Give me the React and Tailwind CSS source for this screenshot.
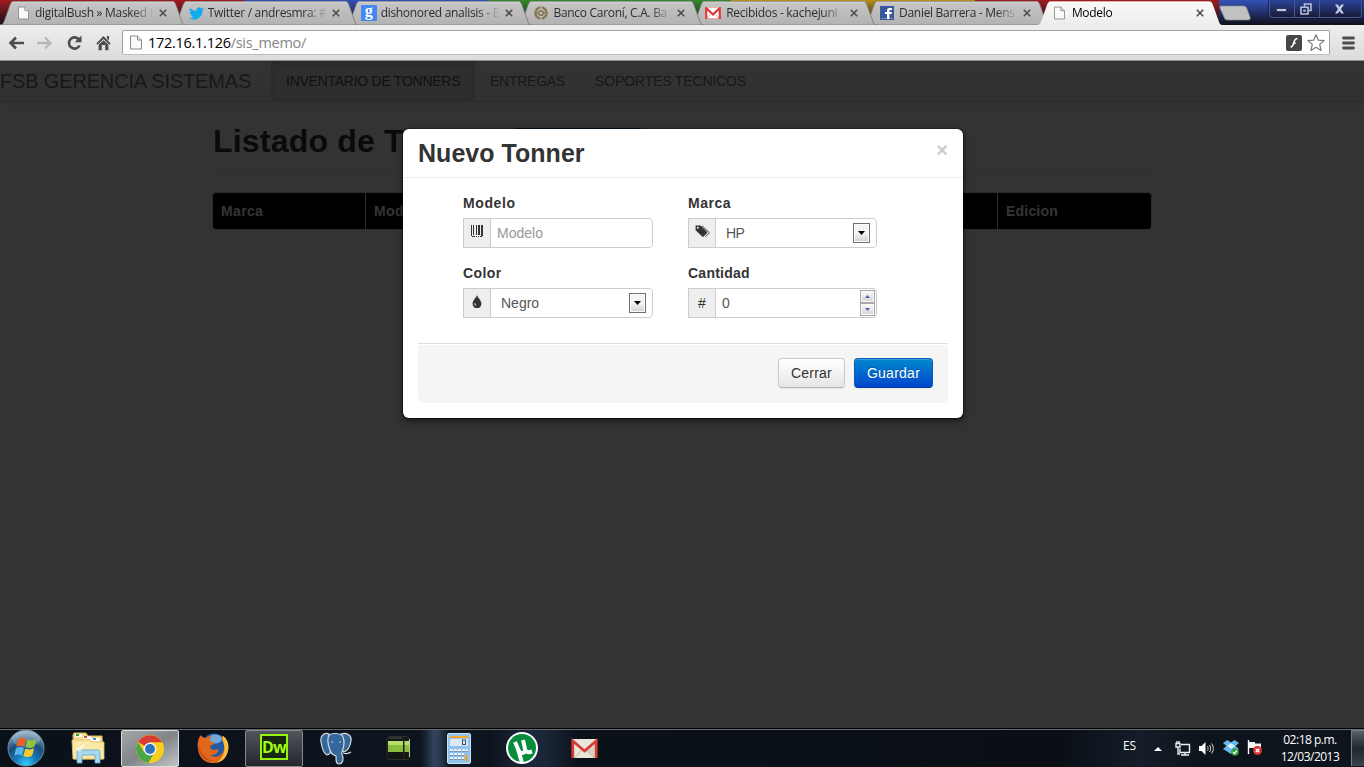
import React from "react";

const stripes = ["bg-[#a01c1f]", "bg-[#3451b8]", "bg-[#37892c]", "bg-[#b8901a]", "bg-[#a01c1f]", "bg-[#3451b8]"];

/* ---------- browser icons ---------- */
function PageIcon({ w = 12, h = 14 }) {
  return (
    <svg width={w} height={h} viewBox="0 0 12 14">
      <path d="M.5 .5H7.5L11.5 4.5V13.5H.5Z" fill="#fafafa" stroke="#8b8b8b" />
      <path d="M7.5 .5V4.5H11.5" fill="#e8e8e8" stroke="#8b8b8b" />
    </svg>
  );
}
function TwitterIcon() {
  return (
    <svg width="15" height="15" viewBox="0 0 24 24">
      <path fill="#0facf0" d="M24 4.6a10 10 0 0 1-2.8.8 5 5 0 0 0 2.1-2.7 10 10 0 0 1-3.1 1.2 4.9 4.9 0 0 0-8.4 4.5A14 14 0 0 1 1.7 3.1a4.9 4.9 0 0 0 1.5 6.6 5 5 0 0 1-2.2-.6 4.9 4.9 0 0 0 3.9 4.9 5 5 0 0 1-2.2.1 4.9 4.9 0 0 0 4.6 3.4A10 10 0 0 1 0 19.5 14 14 0 0 0 21.5 7.1 10 10 0 0 0 24 4.6z" />
    </svg>
  );
}
function GoogleIcon() {
  return (
    <span className="-ml-px flex h-4 w-4 items-center justify-center rounded-[1px] bg-[#4387f4] pb-[4px] font-['Liberation_Serif',serif] text-[16px] font-bold leading-none text-white">g</span>
  );
}
function BankIcon() {
  return (
    <svg width="14" height="14" viewBox="0 0 14 14" fill="none" stroke="#857a55">
      <circle cx="7" cy="7" r="5.6" strokeWidth="2.4" />
      <circle cx="7" cy="7" r="2.3" strokeWidth="1.6" />
      <path d="M7 0V3M7 11V14" stroke="#b9b9b9" strokeWidth="1.4" />
      <path d="M2 7H5M9 7H12" strokeWidth="1.4" />
    </svg>
  );
}
function GmailIcon() {
  return (
    <svg width="16" height="12" viewBox="0 0 16 12">
      <path d="M0 0H16V12H0Z" fill="#fff" />
      <path d="M2 11.5L6 6.5M14 11.5L10 6.5M2 11.5H14" stroke="#f0a8a4" fill="none" />
      <path d="M1.2 12V1L8 7.5L14.8 1V12" fill="none" stroke="#d93a35" strokeWidth="2.2" />
      <path d="M2 .5H14" stroke="#f0b5b0" />
    </svg>
  );
}
function FacebookIcon() {
  return (
    <svg width="14" height="14" viewBox="0 0 14 14">
      <path fill="#3b579d" d="M0 0H14V14H0Z" />
      <path fill="#6d84b4" d="M1 12H13V13H1Z" />
      <path fill="#fff" d="M7 13V8H5V6H7V4.5C7 2.7 8 2 9.6 2H12V4H10.3C9.6 4 9.4 4.3 9.4 5V6H12L11.7 8H9.4V13Z" />
    </svg>
  );
}
function CloseX() {
  return (
    <svg width="8" height="8" viewBox="0 0 8 8" stroke="#4c4c4c" strokeWidth="1.6">
      <path d="M.8 .8L7.2 7.2M7.2 .8L.8 7.2" />
    </svg>
  );
}

function Tab({ icon, title, active, z }) {
  return (
    <div className={"relative -mr-[12.2px] flex h-[25px] w-[185px] shrink-0 items-center " + z}>
      <svg className="absolute inset-0" width="185" height="25" viewBox="0 0 185 25">
        <defs>
          <linearGradient id="tabIdle" x1="0" x2="0" y1="0" y2="1">
            <stop offset="0" stopColor="#c6c6c6" />
            <stop offset="1" stopColor="#b2b2b2" />
          </linearGradient>
          <linearGradient id="tabActive" x1="0" x2="0" y1="0" y2="1">
            <stop offset="0" stopColor="#f9f9f9" />
            <stop offset="1" stopColor="#ededed" />
          </linearGradient>
        </defs>
        <path
          d="M0 25C3 25 4 22 5 19L10 5C11 2 12 1.5 15 1.5H171C174 1.5 175 2 176 5L181 19C182 22 183 25 185 25Z"
          fill={active ? "url(#tabActive)" : "url(#tabIdle)"}
          stroke={active ? "none" : "#777"}
          strokeWidth=".8"
        />
        <path d="M12 2.2H174" stroke={active ? "#fff" : "#d6d6d6"} />
      </svg>
      <div className="relative ml-[15px] flex w-[20px] items-center pl-[1px] pt-[1px]">{icon}</div>
      <div
        className={
          "relative w-[119px] whitespace-nowrap font-['Open_Sans','Noto_Sans',sans-serif] text-[12px] leading-[16px] tracking-[-0.3px]" +
          (active ? " text-black" : " text-[#2e2e2e]") +
          " [mask-image:linear-gradient(to_right,black_97px,transparent_119px)]"
        }
      >
        {title}
      </div>
      <div className="relative ml-[5px] pt-[1px]">
        <CloseX />
      </div>
    </div>
  );
}

function WindowButtons() {
  return (
    <div className="absolute left-[1269px] top-0 flex h-[18px] w-[93px] rounded-b-[4px] border border-t-0 border-[#4c578c] bg-linear-to-b from-[#2c449c] to-[#161b38] shadow-[0_0_0_1px_rgba(10,12,40,0.5)]">
      <div className="flex w-[25px] items-center justify-center border-r border-[#4c578c] pt-[3px] pr-[2px]">
        <svg width="11" height="4" viewBox="0 0 11 4"><path d="M.5 .5H10.5V3.5H.5Z" fill="#c4cae0" stroke="#20284a" strokeWidth=".8" /></svg>
      </div>
      <div className="flex w-[25px] items-center justify-center border-r border-[#4c578c] pr-[2px]">
        <svg width="12" height="12" viewBox="0 0 12 12" fill="none" stroke="#b8c0dc" strokeWidth="1.6">
          <path d="M4.500 3.500V1H11V7.500H8.500" />
          <path d="M1 4.300H8V11H1Z" />
          <path d="M3.700 7H5.300V8.300H3.700Z" strokeWidth="1" />
        </svg>
      </div>
      <div className="flex flex-1 items-center justify-center pr-[2px]">
        <svg width="11" height="10" viewBox="0 0 11 10"><path d="M1 .5H3.800L5.500 3L7.200 .5H10L7 5L10 9.500H7.200L5.500 7L3.800 9.500H1L4 5Z" fill="#c4cae0" /></svg>
      </div>
    </div>
  );
}

function TabStrip() {
  return (
    <div className="relative h-[25px] shrink-0 overflow-hidden bg-[#111]">
      <div className="absolute inset-0 flex">
        {stripes.map((c, i) => (
          <div key={i} className={"h-full w-[243.8px] shrink-0 " + c} />
        ))}
      </div>
      <div className="absolute inset-0 bg-linear-to-b from-transparent to-[#10101a]" />
      <div className="relative flex">
        <Tab z="z-[7]" icon={<span className="pl-[2px]"><PageIcon w={11} h={14} /></span>} title="digitalBush » Masked I" />
        <Tab z="z-[6]" icon={<TwitterIcon />} title="Twitter / andresmra: #" />
        <Tab z="z-[5]" icon={<GoogleIcon />} title="dishonored analisis - B" />
        <Tab z="z-[4]" icon={<BankIcon />} title="Banco Caroní, C.A. Ba" />
        <Tab z="z-[3]" icon={<span className="-ml-[2px]"><GmailIcon /></span>} title="Recibidos - kachejuni" />
        <Tab z="z-[2]" icon={<FacebookIcon />} title="Daniel Barrera - Mens" />
        <Tab z="z-[8]" active icon={<span className="pl-[1px]"><PageIcon w={11} h={14} /></span>} title="Modelo" />
      </div>
      <svg className="absolute left-[1219px] top-[5px]" width="32" height="16" viewBox="0 0 32 16">
        <path d="M1.500 1H24C26.500 1 27.500 2 28 4L31 12C31.500 14 31 15 29 15H9C6.500 15 5.500 14 5 12L1 3C.7 1.700 .8 1 1.500 1Z" fill="#c2c2c2" stroke="#8a8a8a" strokeWidth=".7" />
      </svg>
      <WindowButtons />
    </div>
  );
}

function Toolbar() {
  return (
    <div className="flex h-[36px] shrink-0 items-center border-b border-[#8e8e8e] bg-linear-to-b from-[#ededed] to-[#dcdcdc] pl-[8px]">
      <svg width="16" height="16" viewBox="0 0 16 16" fill="none" stroke="#4d4d4d" strokeWidth="2.600"><path d="M2.500 8H16M8 2.500L2.500 8L8 13.500" /></svg>
      <svg className="ml-[13px]" width="16" height="16" viewBox="0 0 16 16" fill="none" stroke="#b8b8b8" strokeWidth="2.300"><path d="M0 8H13.500M8 2.500L13.500 8L8 13.500" /></svg>
      <svg className="ml-[13px]" width="17" height="16" viewBox="0 0 17 16">
        <path d="M13 4.500A5.600 5.600 0 1 0 13.600 10.500" fill="none" stroke="#4d4d4d" strokeWidth="2.600" />
        <path d="M15.500 .5V7.300H8.700Z" fill="#4d4d4d" />
      </svg>
      <svg className="ml-[13px]" width="15" height="16" viewBox="0 0 15 16">
        <path d="M7.500 1L14.700 8.600L13.300 9.800L7.500 4L1.700 9.800L.3 8.600Z" fill="#4d4d4d" />
        <path d="M11 1H13V5.500L11 3.500Z" fill="#4d4d4d" />
        <path d="M2.600 9.800L7.500 5.300L12.400 9.800V15.300H9.200V10H5.800V15.300H2.600Z" fill="#4d4d4d" />
      </svg>
      <div className="ml-[11px] flex h-[25px] w-[1208px] items-center rounded-[2px] border border-[#a3a3a3] border-b-[#bbb] bg-white pl-[7px] pr-[3px]">
        <PageIcon w={12} h={15} />
        <div className="ml-[6px] flex-1 whitespace-nowrap font-['Open_Sans','Noto_Sans',sans-serif] text-[14.5px] leading-[20px] tracking-[-0.28px] text-[#858585]">
          <span className="text-black">172.16.1.126</span>/sis_memo/
        </div>
        <svg width="16" height="16" viewBox="0 0 16 16">
          <rect width="16" height="16" rx="2" fill="#474747" />
          <path d="M11.500 3.500C8 3.500 8.300 7 7.200 9.600C6.600 11 6 12 4.500 12.200" fill="none" stroke="#fff" strokeWidth="1.600" />
          <path d="M7 8.200H10" stroke="#fff" strokeWidth="1.200" />
        </svg>
        <svg className="ml-[4px]" width="20" height="20" viewBox="0 0 20 20">
          <path d="M10 1.800L12.300 7.200L18.200 7.600L13.700 11.400L15.100 17.400L10 14.200L4.900 17.400L6.300 11.400L1.800 7.600L7.700 7.200Z" fill="#fff" stroke="#7c7c7c" strokeWidth="1.200" strokeLinejoin="round" />
        </svg>
      </div>
      <svg className="ml-[12px]" width="13" height="14" viewBox="0 0 13 14" stroke="#4d4d4d" strokeWidth="2.800" strokeLinecap="round"><path d="M1.500 2H11.500M1.500 7H11.500M1.500 12H11.500" /></svg>
    </div>
  );
}

/* ---------- page ---------- */
function Field({ label, addon, width, track, children }) {
  return (
    <div className="flex flex-col">
      <label className={"mb-[5px] text-[14px] font-bold leading-[20px] text-[#333] " + track}>{label}</label>
      <div className={"flex h-[30px] " + width}>
        <span className="flex w-[28px] shrink-0 items-center justify-center border border-[#ccc] bg-[#eee] text-[14px] leading-[20px] text-[#333]">{addon}</span>
        <div className="-ml-px flex flex-1 items-center rounded-r-[4px] border border-[#ccc] bg-white text-[14px] text-[#555]">{children}</div>
      </div>
    </div>
  );
}
function DropArrow() {
  return (
    <span className="mr-[6px] flex h-[20px] w-[17px] items-center justify-center border border-[#707070] bg-linear-to-b from-[#f4f4f4] from-50% to-[#cfcfcf] shadow-[inset_0_0_0_1px_#fcfcfc]">
      <svg width="7" height="4" viewBox="0 0 7 4"><path d="M0 0H7L3.500 4Z" fill="#000" /></svg>
    </span>
  );
}
function SpinButton({ up }) {
  return (
    <span className="flex h-[13px] w-[15px] items-center justify-center border border-[#a9a9ad] bg-linear-to-b from-[#f8f8f8] to-[#d6d6d8] shadow-[inset_0_0_0_1px_#fafafa]">
      <svg width="5" height="3" viewBox="0 0 5 3"><path d={up ? "M0 3H5L2.500 0Z" : "M0 0H5L2.500 3Z"} fill="#4d63b5" /></svg>
    </span>
  );
}
function Barcode() {
  return (
    <svg className="mb-[3px]" width="12" height="13" viewBox="0 0 12 13" fill="#333" shapeRendering="crispEdges">
      <path d="M0 0H1V11H0ZM2 0H3V10H2ZM5 0H6V10H5ZM7 0H9V10H7ZM10 0H12V11H10ZM1 11H4V12H1ZM5 11H6V12H5ZM7 11H8V12H7ZM9 11H11V12H9Z" />
    </svg>
  );
}
function Tags() {
  return (
    <svg className="mb-[4px]" width="15" height="13" viewBox="0 0 15 13">
      <path d="M.6 .6H5.500L12 6.800C12.400 7.300 12.400 7.800 12 8.200L8.600 11.600C8.100 12 7.600 12 7.200 11.600L.6 5.300Z" fill="#333" />
      <circle cx="2.800" cy="2.800" r="1" fill="#eee" />
      <path d="M7 .8L14 7.200C14.300 7.600 14.300 7.900 14 8.300L10.500 11.800" fill="none" stroke="#444" strokeWidth="1" />
    </svg>
  );
}
function Drop() {
  return (
    <svg className="mb-[4px] mr-[1px]" width="10" height="13" viewBox="0 0 10 13">
      <path d="M5 0C5.600 2.400 9.400 5.500 9.400 8.800A4.300 4.300 0 0 1 .6 8.800C.6 5.500 4.400 2.400 5 0Z" fill="#333" />
      <path d="M2.300 8.300C2.200 9.800 3 10.600 4.300 10.800C4.400 9.800 3.200 9.400 3.300 8Z" fill="#ddd" />
    </svg>
  );
}

function Modal() {
  return (
    <div className="absolute left-[403px] top-[68px] flex h-[289px] w-[560px] flex-col rounded-[6px] bg-white shadow-[0_0_0_1px_rgba(0,0,0,0.3),0_3px_7px_rgba(0,0,0,0.6)]">
      <div className="flex h-[49px] items-start justify-between border-b border-[#eee] px-[15px]">
        <h3 className="pt-[9px] text-[25px] font-bold leading-[30px] tracking-[0.03px] text-[#333]">Nuevo Tonner</h3>
        <button className="pt-[11px] text-[20px] font-bold leading-[20px] text-[#ccc]">×</button>
      </div>
      <div className="grid grid-cols-[190px_189px] gap-x-[35px] gap-y-[15px] pl-[60px] pt-[15px]">
        <Field label="Modelo" track="tracking-[0.6px]" width="w-[190px]" addon={<Barcode />}>
          <span className="pl-[6px] text-[#999]">Modelo</span>
        </Field>
        <Field label="Marca" track="tracking-[0.5px]" width="w-[189px]" addon={<Tags />}>
          <span className="flex-1 pl-[10px] tracking-[-0.5px]">HP</span>
          <DropArrow />
        </Field>
        <Field label="Color" track="tracking-[0.4px]" width="w-[190px]" addon={<Drop />}>
          <span className="flex-1 pl-[10px]">Negro</span>
          <DropArrow />
        </Field>
        <Field label="Cantidad" track="tracking-[0.25px]" width="w-[189px]" addon="#">
          <span className="flex-1 pl-[6px]">0</span>
          <span className="mr-[1px] flex flex-col">
            <SpinButton up />
            <SpinButton />
          </span>
        </Field>
      </div>
      <div className="mx-[15px] mt-[25px] flex h-[60px] items-start justify-end gap-[9px] rounded-b-[6px] border-t border-[#ddd] bg-[#f5f5f5] px-[15px] pt-[14px] shadow-[inset_0_1px_0_#fff]">
        <button className="h-[30px] w-[67px] rounded-[4px] border border-[#ccc] border-b-[#b3b3b3] bg-linear-to-b from-white to-[#e6e6e6] text-[14px] leading-[20px] tracking-[0.2px] text-[#333] shadow-[0_1px_2px_rgba(0,0,0,0.05)]">Cerrar</button>
        <button className="h-[30px] w-[79px] rounded-[4px] border border-[#0a5cc0] border-b-[#003a9e] bg-linear-to-b from-[#0088cc] to-[#0044cc] text-[14px] leading-[20px] tracking-[0.25px] text-white shadow-[inset_0_1px_0_rgba(255,255,255,0.2),0_1px_2px_rgba(0,0,0,0.05)] [text-shadow:0_-1px_0_rgba(0,0,0,0.25)]">Guardar</button>
      </div>
    </div>
  );
}

function Page() {
  return (
    <div className="relative h-[667px] shrink-0 overflow-hidden bg-white font-['Liberation_Sans',Arial,sans-serif]">
      <div className="flex h-[41px] items-stretch border-b border-[#d4d4d4] bg-linear-to-b from-white to-[#f2f2f2] text-[14px] leading-[40px] text-[#777] shadow-[0_1px_10px_rgba(0,0,0,0.1)]">
        <div className="w-[271px] whitespace-nowrap text-[20px] tracking-[-0.16px]">FSB GERENCIA SISTEMAS</div>
        <div className="w-[204px] whitespace-nowrap bg-[#e5e5e5] pl-[15px] tracking-[-0.26px] text-[#555] shadow-[inset_0_3px_8px_rgba(0,0,0,0.125)]">INVENTARIO DE TONNERS</div>
        <div className="w-[105px] pl-[15px] tracking-[-0.25px]">ENTREGAS</div>
        <div className="pl-[15px] tracking-[-0.15px]">SOPORTES TECNICOS</div>
      </div>
      <div className="ml-[212px] flex w-[940px] flex-col">
        <div className="flex h-[70px] items-start border-b border-[#e5e5e5] pt-[19px]">
          <h1 className="whitespace-nowrap pl-px text-[32px] font-bold leading-[40px] tracking-[0.2px] text-[#333]">Listado de Tonners</h1>
          <span className="ml-[4px] mt-[7px] h-[30px] w-[130px] rounded-[4px] bg-[#0074cc]" />
        </div>
        <div className="mt-[20px] flex h-[38px] items-stretch overflow-hidden rounded-[4px] border border-[#ddd] bg-black text-[14px] font-bold leading-[36px] text-white">
          <div className="w-[152px] pl-[8px] tracking-[0.35px]">Marca</div>
          <div className="w-[210px] border-l border-[#ddd] pl-[8px] tracking-[0.35px]">Modelo</div>
          <div className="w-[210px] border-l border-[#ddd] pl-[8px]">Color</div>
          <div className="flex-1 border-l border-[#ddd] pl-[8px]">Cantidad</div>
          <div className="w-[154px] border-l border-[#ddd] pl-[8px] tracking-[0.2px]">Edicion</div>
        </div>
      </div>
      <div className="absolute inset-0 bg-black/80" />
      <Modal />
    </div>
  );
}

/* ---------- taskbar ---------- */
function StartOrb() {
  return (
    <svg width="38" height="38" viewBox="0 0 38 38">
      <defs>
        <radialGradient id="orb" cx=".5" cy=".95" r=".9">
          <stop offset="0" stopColor="#2ed0ff" />
          <stop offset=".35" stopColor="#1576b4" />
          <stop offset=".65" stopColor="#1d4d78" />
          <stop offset="1" stopColor="#88a9c0" />
        </radialGradient>
      </defs>
      <circle cx="19" cy="19" r="18" fill="url(#orb)" stroke="#6f8ba2" strokeWidth="1" />
      <ellipse cx="19" cy="10" rx="14" ry="8" fill="#fff" opacity=".2" />
      <path d="M11 10.500C14 8 16 8.500 19 10L17.300 17.500C14.500 16 12 16.200 9.300 18Z" fill="#f06125" />
      <path d="M20.300 10.500C23.500 12 26 12 29.500 10L27.500 17.500C24.500 19.500 21.500 19.500 18.600 18Z" fill="#8fc53d" />
      <path d="M9 19.300C12 17.500 14.500 17.500 17 19L15 26.500C12.500 25 10 25 7.300 27Z" fill="#56b5ea" />
      <path d="M18.300 19.500C21 21 24 21 27.200 19L25.200 26.500C22 28.500 19 28.500 16.400 27Z" fill="#fdc92e" />
    </svg>
  );
}
function ExplorerIcon() {
  return (
    <svg width="34" height="32" viewBox="0 0 34 32">
      <path d="M2 3L3 1H15L17 4H31L32 27H3Z" fill="#f4dc85" stroke="#d8b458" />
      <path d="M4 2H11V5H4Z" fill="#fff" /><path d="M5 2H8V4H5Z" fill="#27a234" />
      <path d="M12 4H20V7H12Z" fill="#fff" /><path d="M13 4H16V6H13Z" fill="#d14935" />
      <path d="M20 6H29V9H20Z" fill="#fff" /><path d="M22 6H25V8H22Z" fill="#3a8de0" />
      <path d="M1 8H18L20 10H33V27H2Z" fill="#fae9a6" stroke="#dfc069" strokeWidth=".8" />
      <path d="M6 31V20C6 19 7 18 8 18H27C28 18 29 19 29 20V31H24V23H11V31Z" fill="#a8d8ef" stroke="#63a4c7" strokeWidth=".8" />
      <path d="M4 17L16 11L9 20Z" fill="#fff" opacity=".6" />
    </svg>
  );
}
function ChromeIcon() {
  return (
    <svg width="28" height="28" viewBox="0 0 28 28">
      <circle cx="14" cy="14" r="14" fill="#f8ce1c" />
      <path d="M14 14L2 7A14 14 0 0 1 26.300 7.500H14Z" fill="#d83c32" />
      <path d="M1.900 7A14 14 0 0 0 12.500 27.900L18.500 17.500L14 14L8 17Z" fill="#4ba64a" />
      <path d="M14 7.500H26.300C29 14 27 25 12.500 27.900L20 16.500Z" fill="#f8ce1c" />
      <circle cx="14" cy="14" r="6.500" fill="#f4f4f4" />
      <circle cx="14" cy="14" r="5" fill="#2b73bd" />
    </svg>
  );
}
function FirefoxIcon() {
  return (
    <svg width="32" height="32" viewBox="0 0 32 32">
      <circle cx="17" cy="14" r="12.500" fill="#245aa5" />
      <ellipse cx="18" cy="7" rx="7" ry="4.500" fill="#8cc4ec" opacity=".75" />
      <path d="M2 6C3 4 4 3 4 3C5 5 7 6 9 6C11 4 13 4 15 5C13 6 12 8 13 9C15 10 17 10 17 11C17 13 14 13 13 15C14 18 17 19 21 17C22 21 17 24 13 23C18 27 26 24 27 17C28 12 25 8 25 7C24 5 25 4 26 4C32 8 33 17 29 24C25 31 15 33 8 29C1 25-1 14 2 6Z" fill="#e2661d" />
      <path d="M26 4C32 8 33 17 29 24C27 28 23 30 19 31C25 27 29 20 27 12C26 9 25 6 26 4Z" fill="#f9c03b" />
      <path d="M2 12C2 21 8 28 17 29C10 30 1 24 2 12Z" fill="#b73818" />
    </svg>
  );
}
function PostgresIcon() {
  return (
    <svg width="32" height="33" viewBox="0 0 32 33" stroke="#d6dde2" strokeWidth="1.200" strokeLinejoin="round">
      <path d="M9 2C4 0 0 4 1 10C2 16 4 22 7 23C9 23 10 21 11 20Z" fill="#35689a" />
      <path d="M21 2C26 0 32 3 31 9C30 15 27 19 24 20L21 17Z" fill="#35689a" />
      <path d="M9 3C12 1 18 1 22 3C25 8 24 15 22 20C21 23 23 23 23 26C23 30 22 32 19 32C16 32 16 29 16 24C13 23 11 22 10 18C8 13 7 7 9 3Z" fill="#35689a" />
      <path d="M23 21C26 22 28 22 31 20" fill="none" />
      <circle cx="12" cy="10" r=".7" fill="#fff" stroke="none" /><circle cx="20" cy="10" r=".7" fill="#fff" stroke="none" />
    </svg>
  );
}
function BatteryIcon() {
  return (
    <svg width="25" height="24" viewBox="0 0 25 24">
      <rect x="1" y=".5" width="22" height="23" rx="2.500" fill="#141614" stroke="#2c2e2c" />
      <path d="M2 5H23V16H2Z" fill="#8bbd3d" /><path d="M2 5H23V9H2Z" fill="#b9dd6c" />
      <path d="M17 1H18.500V23H17Z" fill="#20241a" />
      <path d="M23.500 3V21" stroke="#b9c39d" />
      <path d="M3 2H16" stroke="#555" />
    </svg>
  );
}
function CalcIcon() {
  return (
    <svg width="24" height="31" viewBox="0 0 24 31">
      <rect x=".5" y=".5" width="23" height="30" rx="1.500" fill="#8fc3ed" stroke="#c8e2f6" />
      <path d="M3 3H21V5H3Z" fill="#f7a534" /><path d="M3 6H21V13H3Z" fill="#d9e8f2" />
      <rect x="15.500" y="7" width="3" height="4.500" fill="none" stroke="#35506f" strokeWidth="1" />
      <path d="M3 17.500H21M3 21.500H17M3 25.500H17" stroke="#f6faff" strokeWidth="2.500" strokeDasharray="3 1" />
      <path d="M3 18.500H21M3 22.500H17M3 26.500H17" stroke="#7b8ba5" strokeWidth="1" strokeDasharray="3 1" />
      <path d="M18 22H20.500V28H18Z" fill="#f19b28" />
    </svg>
  );
}
function UTorrentIcon() {
  return (
    <svg width="32" height="32" viewBox="0 0 32 32">
      <circle cx="16" cy="16" r="16" fill="#fff" /><circle cx="16" cy="16" r="14" fill="#078c3c" />
      <path d="M9 10L13 19.500C14.500 22.500 20 21 19 17L17 8M19 17C20 21 23 20.500 26 19.500" fill="none" stroke="#fff" strokeWidth="4" />
      <path d="M12 17L16 31" stroke="#fff" strokeWidth="4" />
    </svg>
  );
}
function GmailTask() {
  return (
    <svg width="27" height="21" viewBox="0 0 27 21">
      <rect x="1" y="1" width="25" height="19" rx="1" fill="#e9e6da" />
      <path d="M4 20L11 11M23 20L16 11" stroke="#c0bcae" /><path d="M13.500 13L24 20H26V6Z" fill="#c9c5b6" opacity=".6" />
      <path d="M1.800 20V3L13.500 13L25.200 3V20" fill="none" stroke="#d63c33" strokeWidth="2.800" />
    </svg>
  );
}

function Tray() {
  return (
    <div className="ml-auto flex h-full items-center font-['Open_Sans','Noto_Sans',sans-serif] text-white">
      <span className="mb-[4px] w-[31px] text-[12px] leading-none tracking-[-0.1px]">ES</span>
      <svg className="mt-[1px]" width="8" height="4" viewBox="0 0 8 4"><path d="M0 4H8L4 0Z" fill="#fff" /></svg>
      <svg className="ml-[13px]" width="16" height="15" viewBox="0 0 16 15" fill="none" stroke="#eee" strokeWidth="1.400">
        <path d="M6 3.500H14.500V11.500H5V7.500M10 11.500V14M6 14H14" /><path d="M1 2.500H5V6H1ZM2 0V2.500M4 0V2.500M3 6V13H5" />
      </svg>
      <svg className="ml-[8px]" width="16" height="15" viewBox="0 0 16 15">
        <path d="M0 5H2.500L6.500 1V14L2.500 10H0Z" fill="#fff" />
        <path d="M8.500 5.500C9.300 7 9.300 8 8.500 9.500M10.500 4C12 6.500 12 8.500 10.500 11M12.500 2.500C15 6 15 9 12.500 12.500" fill="none" stroke="#ddd" />
      </svg>
      <svg className="ml-[8px]" width="16" height="16" viewBox="0 0 16 16">
        <path d="M4.500 0L8 2.500L11.500 0L16 3L12.500 6L16 9L8 14L0 9L3.500 6L0 3Z" fill="#65b8ee" />
        <path d="M8 3L12 6L8 9L4 6Z" fill="#d6effe" />
        <circle cx="12" cy="12" r="3.800" fill="#32a03c" /><path d="M10 12L11.500 13.500L14 10.500" stroke="#fff" fill="none" strokeWidth="1.200" />
      </svg>
      <svg className="ml-[8px]" width="16" height="16" viewBox="0 0 16 16">
        <path d="M1.500 0V14" stroke="#fff" strokeWidth="1.400" /><path d="M2 2H8V3.500H14V9H8V8H2Z" fill="#f4f4f4" />
        <circle cx="10.500" cy="10.500" r="4.500" fill="#d93029" /><path d="M8.700 8.700L12.300 12.300M12.300 8.700L8.700 12.300" stroke="#fff" strokeWidth="1.400" />
      </svg>
      <div className="ml-[14px] flex w-[66px] flex-col items-center whitespace-nowrap text-[12px] leading-[17px] tracking-[-0.5px]">
        <span>02:18 p.m.</span>
        <span>12/03/2013</span>
      </div>
      <div className="ml-[8px] h-full w-[13px] border-l border-t border-[#777f86] bg-linear-to-b from-[#59616a] via-[#20262d] to-[#3b424a]" />
    </div>
  );
}

function Taskbar() {
  return (
    <div className="flex h-[39px] shrink-0 items-center border-t border-black bg-[#0d131b] bg-[linear-gradient(to_right,#0a1119_0px,#0d141d_420px,#1a2536_426px,#34445e_434px,#2b394f_440px,#111923_449px,#0d141d_490px,#1b273a_530px,#1b2638_545px,#0b1119_580px,#0a0f16_1060px,#141d29_1140px,#0d141c_1200px,#0d141c_1364px)]">
      <div className="flex h-[38px] flex-1 items-center border-t border-[#656b71] pb-[1px]">
        <div className="ml-[7px] flex w-[38px]"><StartOrb /></div>
        <div className="ml-[26px] flex w-[34px] justify-center"><ExplorerIcon /></div>
        <div className="ml-[16px] flex h-[37px] w-[58px] items-center justify-center self-start rounded-[2px] border border-[#dcdcdc] bg-linear-to-br from-[#a5a7a9] via-[#828588] to-[#c2c3c5]"><ChromeIcon /></div>
        <div className="ml-[18px] flex w-[32px]"><FirefoxIcon /></div>
        <div className="ml-[16px] flex h-[37px] w-[58px] items-center justify-center self-start rounded-[2px] border border-[#858a90] bg-linear-to-b from-[#51555a] to-[#24282e]">
          <span className="mb-[4px] flex h-[26px] w-[28px] items-center justify-center border-2 border-[#96f20a] bg-[#16280f] font-['Open_Sans',sans-serif] text-[16px] font-bold leading-none tracking-[-0.8px] text-[#a1fb12]">Dw</span>
        </div>
        <div className="ml-[17px] flex w-[32px]"><PostgresIcon /></div>
        <div className="ml-[34px] flex w-[25px]"><BatteryIcon /></div>
        <div className="ml-[36px] flex w-[24px]"><CalcIcon /></div>
        <div className="ml-[35px] flex w-[32px]"><UTorrentIcon /></div>
        <div className="ml-[33px] flex w-[27px]"><GmailTask /></div>
        <Tray />
      </div>
    </div>
  );
}

export default function App() {
  return (
    <div className="flex h-[767px] w-[1364px] flex-col overflow-hidden bg-[#333]">
      <TabStrip />
      <Toolbar />
      <Page />
      <Taskbar />
    </div>
  );
}
